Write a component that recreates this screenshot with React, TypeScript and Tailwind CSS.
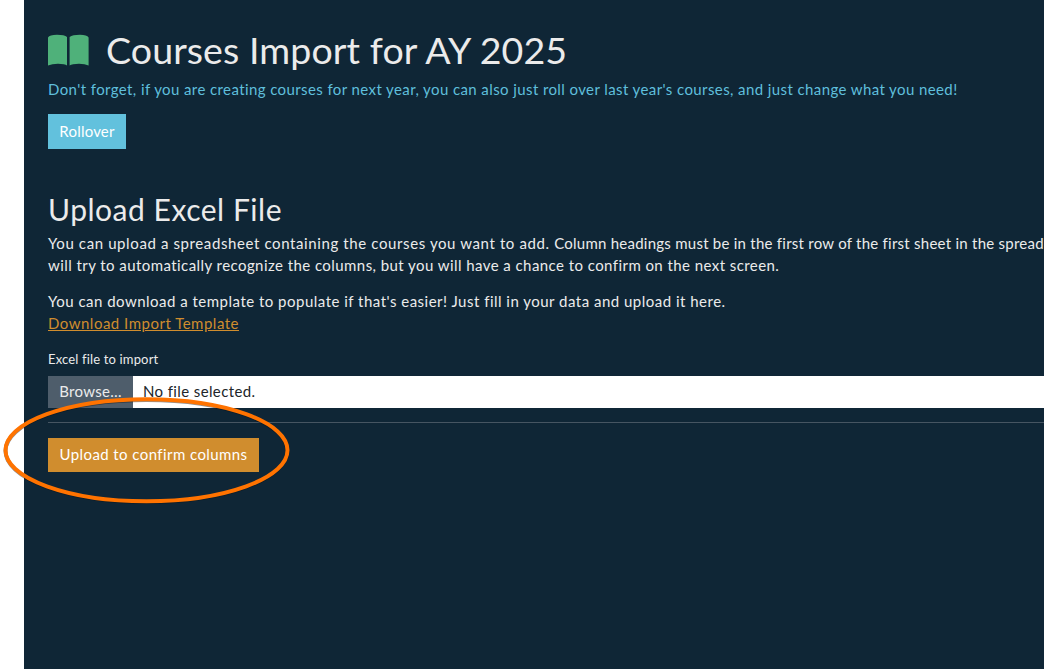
const BookIcon = () => (
  <svg width="41" height="33" viewBox="0 0 41 33" fill="#4fb17a" className="block shrink-0" aria-hidden="true">
    <path d="M0 3.4Q1.5 1 9 .8Q16.5 .8 19 3V31.6Q17 29.8 10 29.8Q4 29.8 0 31.4Z" />
    <path d="M21.6 3Q24.5 .8 32 .8Q39 1 40.6 3.4V31.4Q37 29.8 31 29.8Q24 29.8 21.6 31.6Z" />
  </svg>
);

export default function App() {
  return (
    <div className="relative h-[669px] w-[1044px] overflow-hidden bg-white pl-6 font-['Lato',sans-serif] text-[15px] text-[#ebebeb]">
      <main className="h-full bg-[#0f2636] pl-6 whitespace-nowrap">
        <header className="flex h-[78px] items-start pt-[34px]">
          <BookIcon />
          <h1 className="ml-[17px] -mt-[9px] text-[37.5px] leading-[50px] tracking-[0.1px]">Courses Import for AY 2025</h1>
        </header>
        <p className="h-[36px] leading-[22px] tracking-[0.402px] text-[#5fbfdc]">
          Don't forget, if you are creating courses for next year, you can also just roll over last year's courses, and just change what you need!
        </p>
        <button className="block h-[35px] w-[78px] bg-[#62c1dd] text-white">
          <span className="tracking-[0.2px]">Rollover</span>
        </button>

        <section className="pt-[40px]">
          <h2 className="h-[43px] text-[30px] leading-[40px] tracking-[0.52px]">Upload Excel File</h2>
          <p className="leading-[22px]">
            <span className="tracking-[0.61px]">You can upload a spreadsheet containing the courses you want to add. </span>
            <span className="tracking-[0.25px]">Column headings must be in the first row of the first sheet in the spread</span>
            <br />
            <span className="tracking-[0.435px]">
              will try to automatically recognize the columns, but you will have a chance to confirm on the next screen.
            </span>
          </p>
          <p className="mt-[15px] leading-[21.5px]">
            <span className="tracking-[0.49px]">
              You can download a template to populate if that's easier! Just fill in your data and upload it here.
            </span>
            <br />
            <a className="text-[#d08d2e] underline tracking-[0.5px]">Download Import Template</a>
          </p>
          <label className="mt-[15px] block h-[27px] text-[13px] leading-[20px]">
            <span className="tracking-[0.16px]">Excel file to import</span>
          </label>
          <div className="flex h-8 items-center bg-white text-[#212529]">
            <span className="flex h-full w-[85px] items-center justify-center bg-[#4e5d6b] pb-px text-[#ebebeb]">
              <span className="tracking-[0.3px]">Browse…</span>
            </span>
            <span className="ml-[10px] pb-px tracking-[0.38px]">No file selected.</span>
          </div>
          <hr className="mt-[14px] border-[#465562]" />
          <button className="mt-[15px] block h-[34px] w-[211px] bg-[#d08d2e] pb-px text-white">
            <span className="tracking-[0.42px]">Upload to confirm columns</span>
          </button>
        </section>
      </main>
      <svg className="absolute left-0 top-[390px]" width="300" height="120" viewBox="0 0 300 120" fill="none" aria-hidden="true">
        <ellipse cx="146.5" cy="61" rx="141" ry="51" stroke="#071019" strokeOpacity=".45" strokeWidth="4" />
        <ellipse cx="146.5" cy="60.2" rx="141" ry="51" stroke="#ff7300" strokeWidth="4" />
      </svg>
    </div>
  );
}
